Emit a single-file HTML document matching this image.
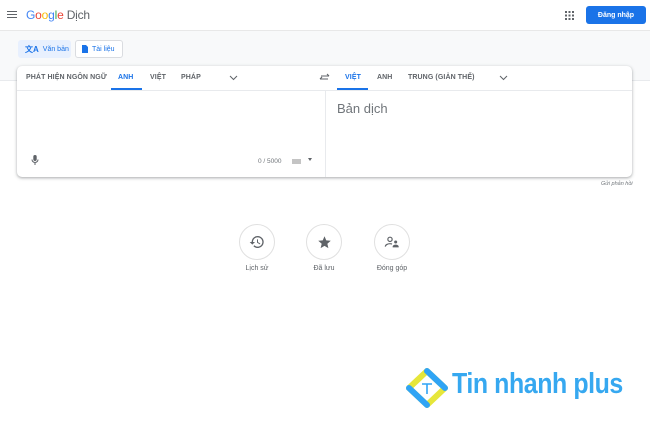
<!DOCTYPE html>
<html><head><meta charset="utf-8"><style>
*{margin:0;padding:0;box-sizing:border-box}
body{width:650px;height:430px;background:#fff;font-family:"Liberation Sans",Arial,sans-serif;position:relative;overflow:hidden;color:#5f6368}
.abs{position:absolute;white-space:nowrap}
.hdr{left:0;top:0;width:650px;height:31px;border-bottom:1px solid #e8e8e8;background:#fff}
.band{left:0;top:31px;width:650px;height:50px;background:#f8f9fa;border-bottom:1px solid #e8eaed}
.btn{top:40px;height:18px;border:1px solid #dadce0;border-radius:3px;font-size:7px;color:#1a73e8;display:flex;align-items:center;padding-left:6px;gap:4px;background:#fff}
.card{left:17px;top:66px;width:615px;height:111px;background:#fff;border-radius:5px;box-shadow:0 1px 2px rgba(60,64,67,.3),0 1px 3px 1px rgba(60,64,67,.12)}
.tab{top:74px;font-size:7px;font-weight:bold;color:#5f6368;letter-spacing:.1px}
.circ{width:36px;height:36px;border:1px solid #e0e0e0;border-radius:50%;top:224px;display:flex;align-items:center;justify-content:center}
.lbl{top:265px;font-size:7px;color:#5f6368;width:60px;text-align:center}
</style></head><body>
<div class="abs hdr"></div>
<div class="abs" style="left:7px;top:11px;width:10px;height:1.3px;background:#5f6368;box-shadow:0 3px 0 #5f6368,0 6px 0 #5f6368"></div>
<div class="abs" style="left:26px;top:8px;font-size:12px;letter-spacing:-.2px"><span style="color:#4285f4">G</span><span style="color:#ea4335">o</span><span style="color:#fbbc05">o</span><span style="color:#4285f4">g</span><span style="color:#34a853">l</span><span style="color:#ea4335">e</span> <span style="color:#5f6368">Dịch</span></div>
<svg class="abs" style="left:565px;top:11px" width="9" height="9" viewBox="0 0 9 9" fill="#5f6368"><rect x="0" y="0" width="2" height="2"/><rect x="3.5" y="0" width="2" height="2"/><rect x="7" y="0" width="2" height="2"/><rect x="0" y="3.5" width="2" height="2"/><rect x="3.5" y="3.5" width="2" height="2"/><rect x="7" y="3.5" width="2" height="2"/><rect x="0" y="7" width="2" height="2"/><rect x="3.5" y="7" width="2" height="2"/><rect x="7" y="7" width="2" height="2"/></svg>
<div class="abs" style="left:586px;top:6px;width:60px;height:18px;background:#1a73e8;border-radius:3px;color:#fff;font-size:7px;font-weight:bold;display:flex;align-items:center;justify-content:center">Đăng nhập</div>
<div class="abs band"></div>
<div class="abs btn" style="left:18px;width:53px;background:#e8f0fe;border-color:#e8f0fe"><span style="font-size:8px;font-weight:bold">文A</span><span style="color:#1a73e8">Văn bản</span></div>
<div class="abs btn" style="left:75px;width:48px"><svg width="6" height="8" viewBox="0 0 6 8"><path d="M0 0h4l2 2v6H0z" fill="#1a73e8"/></svg><span>Tài liệu</span></div>
<div class="abs card"></div>
<div class="abs" style="left:17px;top:90px;width:615px;height:1px;background:#e8eaed"></div>
<div class="abs" style="left:325px;top:90px;width:1px;height:87px;background:#e8eaed"></div>
<div class="abs tab" style="left:26px">PHÁT HIỆN NGÔN NGỮ</div>
<div class="abs tab" style="left:118px;color:#1a73e8">ANH</div>
<div class="abs" style="left:111px;top:88px;width:31px;height:2px;background:#1a73e8"></div>
<div class="abs tab" style="left:150px">VIỆT</div>
<div class="abs tab" style="left:181px">PHÁP</div>
<svg class="abs" style="left:229px;top:75px" width="9" height="6" viewBox="0 0 9 6"><path d="M1 1l3.5 3.5L8 1" stroke="#5f6368" fill="none" stroke-width="1"/></svg>
<svg class="abs" style="left:319px;top:73px" width="11" height="9" viewBox="0 0 11 9"><path d="M1 6h8M1 6l2-2M10 3H2M10 3L8 1" stroke="#5f6368" fill="none" stroke-width="1.1"/></svg>
<div class="abs tab" style="left:345px;color:#1a73e8">VIỆT</div>
<div class="abs" style="left:337px;top:88px;width:31px;height:2px;background:#1a73e8"></div>
<div class="abs tab" style="left:377px">ANH</div>
<div class="abs tab" style="left:408px">TRUNG (GIẢN THỂ)</div>
<svg class="abs" style="left:499px;top:75px" width="9" height="6" viewBox="0 0 9 6"><path d="M1 1l3.5 3.5L8 1" stroke="#5f6368" fill="none" stroke-width="1"/></svg>
<div class="abs" style="left:337px;top:101px;font-size:13px;color:#70757a">Bản dịch</div>
<svg class="abs" style="left:31px;top:155px" width="8" height="11" viewBox="0 0 8 11"><rect x="2.3" y="0" width="3.4" height="6" rx="1.7" fill="#5f6368"/><path d="M1 4.5a3 3 0 0 0 6 0M4 7.5V10" stroke="#5f6368" fill="none" stroke-width="1"/></svg>
<div class="abs" style="left:258px;top:158px;font-size:6.5px;color:#70757a">0 / 5000</div>
<div class="abs" style="left:292px;top:159px;width:9px;height:5px;background:#c4c4c4"></div>
<div class="abs" style="left:308px;top:158px;width:0;height:0;border-left:2px solid transparent;border-right:2px solid transparent;border-top:3px solid #5f6368"></div>
<div class="abs" style="left:601px;top:181px;font-size:5.5px;font-style:italic;color:#70757a">Gửi phản hồi</div>
<div class="abs circ" style="left:239px"><svg width="16" height="16" viewBox="0 0 24 24"><path d="M13 3a9 9 0 0 0-9 9H1l4 4 4-4H6a7 7 0 1 1 2 4.9l-1.4 1.4A9 9 0 1 0 13 3zm-1 5v5l4.3 2.5.7-1.2-3.5-2.1V8z" fill="#5f6368"/></svg></div>
<div class="abs circ" style="left:306px"><svg width="15" height="15" viewBox="0 0 24 24"><path d="M12 17.3l6.2 3.7-1.6-7L22 9.2l-7.2-.6L12 2 9.2 8.6 2 9.2 7.5 14l-1.7 7z" fill="#5f6368"/></svg></div>
<div class="abs circ" style="left:374px"><svg width="16" height="16" viewBox="0 0 24 24"><circle cx="9" cy="8" r="3.2" stroke="#5f6368" stroke-width="1.8" fill="none"/><path d="M2 19c0-3 4-4.5 7-4.5 1 0 2 .2 3 .5" stroke="#5f6368" stroke-width="1.8" fill="none"/><circle cx="17.5" cy="12" r="2.3" fill="#5f6368"/><path d="M13 19c0-2 2.5-3 4.5-3s4.5 1 4.5 3v1h-9z" fill="#5f6368"/></svg></div>
<div class="abs lbl" style="left:227px">Lịch sử</div>
<div class="abs lbl" style="left:294px">Đã lưu</div>
<div class="abs lbl" style="left:362px">Đóng góp</div>
<svg class="abs" style="left:405px;top:368px" width="44" height="40" viewBox="0 0 44 40"><path d="M22 3L40 20L22 37L4 20Z" fill="none" stroke="#e6e63a" stroke-width="6" stroke-linejoin="round"/><path d="M22 3L40 20M4 20L22 37" stroke="#2fa4f5" stroke-width="6" stroke-linecap="round"/><path d="M17 16h10M22 16v10" stroke="#2fa4f5" stroke-width="1.6"/></svg>
<div class="abs" style="left:452px;top:368px;font-size:29px;font-weight:bold;color:#36a8f0;letter-spacing:-.5px;transform:scaleX(.86);transform-origin:left top">Tin nhanh plus</div>
</body></html>
